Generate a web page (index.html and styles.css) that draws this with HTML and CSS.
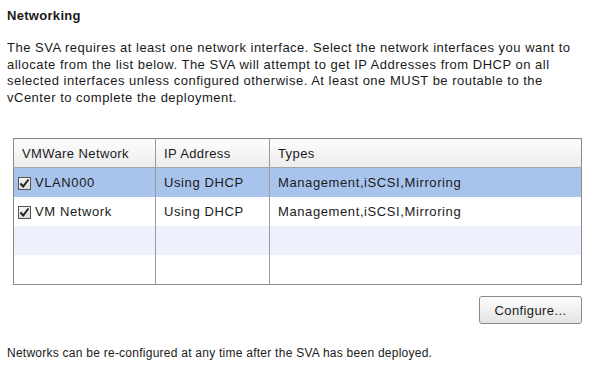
FILE: index.html
```html
<!DOCTYPE html>
<html lang="en">
<head>
    <meta charset="UTF-8">
    <title>Networking</title>
    <link rel="stylesheet" href="styles.css">
</head>
<body>

<div class="page">
    <h1 class="title">Networking</h1>
    <p class="intro">The SVA requires at least one network interface. Select the network interfaces you want to allocate from the list below. The SVA will attempt to get IP Addresses from DHCP on all selected interfaces unless configured otherwise. At least one MUST be routable to the vCenter to complete the deployment.</p>

    <table class="net-table">
        <thead>
            <tr>
                <th class="col-net">VMWare Network</th>
                <th class="col-ip">IP Address</th>
                <th>Types</th>
            </tr>
        </thead>
        <tbody>
            <tr class="selected">
                <td><span class="check"><svg viewBox="0 0 13 13" width="13" height="13"><path d="M2.5 6.5 L5.2 9.5 L10.5 2.5" fill="none" stroke="#222" stroke-width="2"/></svg></span>VLAN000</td>
                <td>Using DHCP</td>
                <td>Management,iSCSI,Mirroring</td>
            </tr>
            <tr>
                <td><span class="check"><svg viewBox="0 0 13 13" width="13" height="13"><path d="M2.5 6.5 L5.2 9.5 L10.5 2.5" fill="none" stroke="#222" stroke-width="2"/></svg></span>VM Network</td>
                <td>Using DHCP</td>
                <td>Management,iSCSI,Mirroring</td>
            </tr>
            <tr class="alt">
                <td></td>
                <td></td>
                <td></td>
            </tr>
            <tr>
                <td></td>
                <td></td>
                <td></td>
            </tr>
        </tbody>
    </table>

    <div class="actions">
        <button class="btn">Configure...</button>
    </div>

    <p class="note">Networks can be re-configured at any time after the SVA has been deployed.</p>
</div>

</body>
</html>
```

FILE: styles.css
```css
body {
    margin: 0;
    background: #fff;
    color: #1a1a1a;
    font-family: 'Liberation Sans', Arial, sans-serif;
    font-size: 13px;
}

.page {
    width: 580px;
    padding: 8px 0 0 7px;
}

.title {
    font-size: 13px;
    font-weight: bold;
    letter-spacing: 0.3px;
    margin: 0 0 17px 0;
    line-height: 15px;
}

.intro {
    margin: 0 0 32px 0;
    line-height: 16.5px;
    letter-spacing: 0.5px;
}

.net-table {
    width: 569px;
    margin-left: 6px;
    border-collapse: collapse;
    border: 1px solid #8a8a8a;
    letter-spacing: 0.6px;
}

.net-table th {
    text-align: left;
    font-weight: normal;
    letter-spacing: 0.4px;
    height: 28px;
    padding: 0 0 0 8px;
    background: linear-gradient(#fdfdfd, #ececec);
    border-bottom: 1px solid #a5a5a5;
    border-right: 1px solid #9a9a9a;
}

.net-table td {
    height: 29px;
    padding: 0 0 0 8px;
    border-right: 1px solid #9a9a9a;
}

.net-table td:first-child {
    padding-left: 4px;
}

.net-table th:last-child,
.net-table td:last-child {
    border-right: none;
}

.col-net {
    width: 133px;
}

.col-ip {
    width: 105px;
}

.selected td {
    background: #a9c4ec;
}

.alt td {
    background: #eef1fb;
}

.check {
    display: inline-block;
    width: 13px;
    height: 13px;
    border: 1px solid #555;
    background: linear-gradient(#f4f4f4, #dcdcdc);
    vertical-align: -3px;
    margin-right: 4px;
    box-sizing: border-box;
}

.check svg {
    display: block;
    margin: -1px 0 0 -1px;
}

.actions {
    display: flex;
    justify-content: flex-end;
    width: 575px;
    margin-top: 11px;
}

.btn {
    width: 103px;
    height: 28px;
    font-family: 'Liberation Sans', Arial, sans-serif;
    font-size: 13px;
    letter-spacing: 0.4px;
    color: #1a1a1a;
    border: 1px solid #8a8a8a;
    border-radius: 3px;
    background: linear-gradient(#fdfdfd, #e4e4e4);
}

.note {
    margin: 21px 0 0 0;
    font-size: 12px;
    letter-spacing: 0.25px;
    line-height: 16px;
}
```
